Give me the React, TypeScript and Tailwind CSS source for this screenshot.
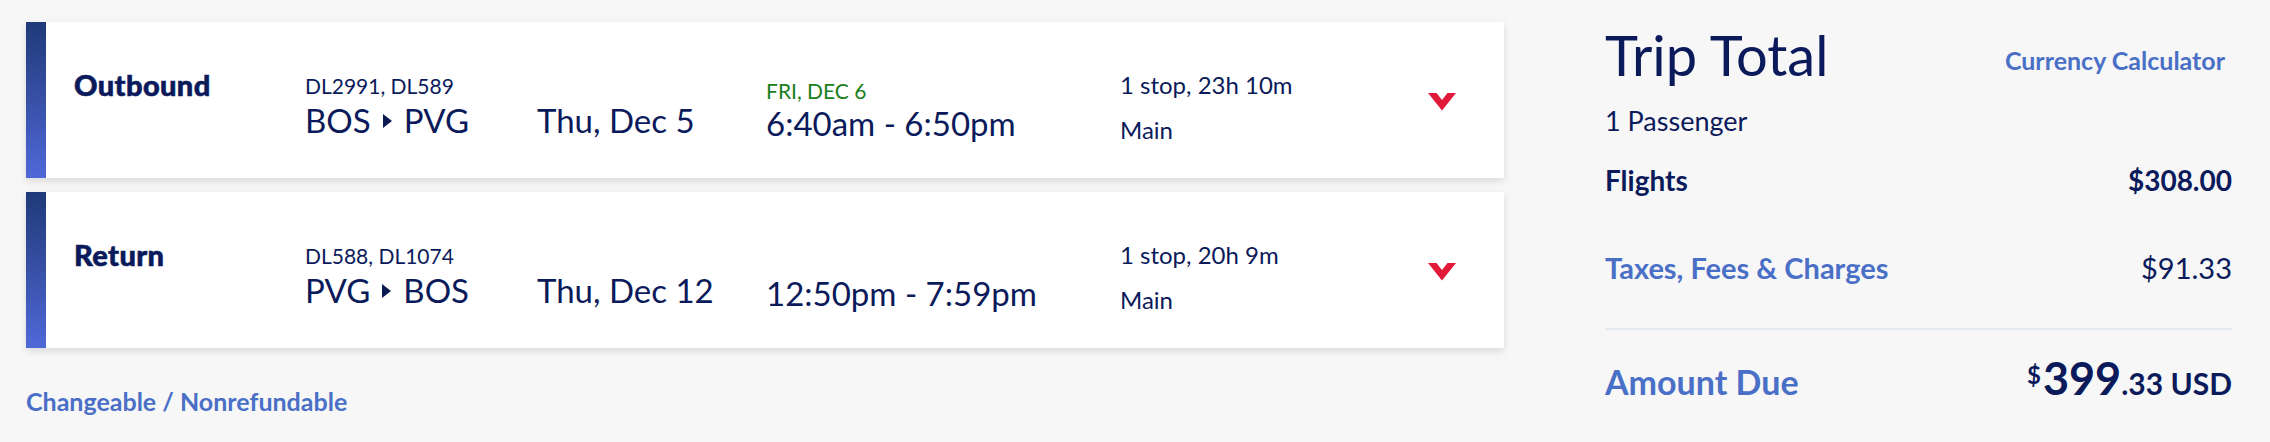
import { ReactNode } from 'react'

interface Leg {
  label: string
  flights: string
  from: string
  to: string
  date: string
  arrivalNote?: string
  times: string
  stops: string
  cabin: string
}

const legs: Leg[] = [
  {
    label: 'Outbound',
    flights: 'DL2991, DL589',
    from: 'BOS',
    to: 'PVG',
    date: 'Thu, Dec 5',
    arrivalNote: 'FRI, DEC 6',
    times: '6:40am - 6:50pm',
    stops: '1 stop, 23h 10m',
    cabin: 'Main',
  },
  {
    label: 'Return',
    flights: 'DL588, DL1074',
    from: 'PVG',
    to: 'BOS',
    date: 'Thu, Dec 12',
    times: '12:50pm - 7:59pm',
    stops: '1 stop, 20h 9m',
    cabin: 'Main',
  },
]

function Chevron() {
  return (
    <svg width="28" height="18" viewBox="0 0 28 18" className="block">
      <path d="M0 0h8.5l5.5 7L19.5 0h8.5L14 17.5z" fill="#e01a38" />
    </svg>
  )
}

function Caret() {
  return (
    <svg width="9" height="14" viewBox="0 0 9 14" className="mx-[12px] mt-[2px] inline-block">
      <path d="M0 0l9 7-9 7z" fill="#0b1a52" />
    </svg>
  )
}

function LegCard({ leg }: { leg: Leg }) {
  return (
    <div className="flex h-[156px] w-[1478px] bg-white shadow-[0_3px_8px_rgba(0,0,0,0.12)]">
      <div className="w-[20px] shrink-0 bg-gradient-to-b from-[#1f3a78] to-[#5068d8]" />
      <div className="w-[259px] shrink-0 pl-[28px] pt-[45px]">
        <div className="text-[29px] leading-[35px] font-black tracking-[0.4px] text-[#0b1a5a] [-webkit-text-stroke:0.6px_#0b1a5a]">
          {leg.label}
        </div>
      </div>
      <div className="w-[232px] shrink-0 pt-[51px]">
        <div className="text-[21px] leading-[25px] text-[#0b1a5a]">{leg.flights}</div>
        <div className="mt-[2px] flex items-center text-[33px] leading-[40px] text-[#0b1a5a]">
          {leg.from}
          <Caret />
          {leg.to}
        </div>
      </div>
      <div className="w-[229px] shrink-0 pt-[78px]">
        <div className="text-[33px] leading-[40px] text-[#0b1a5a]">{leg.date}</div>
      </div>
      <div className="w-[354px] shrink-0 pt-[56px]">
        <div className="h-[25px] text-[21px] leading-[25px] text-[#1b7d1b]">
          {leg.arrivalNote}
        </div>
        <div className="text-[33px] leading-[40px] text-[#0b1a5a]">{leg.times}</div>
      </div>
      <div className="w-[308px] shrink-0 pt-[48px]">
        <div className="text-[24px] leading-[29px] text-[#0b1a5a]">{leg.stops}</div>
        <div className="mt-[16px] text-[24px] leading-[29px] text-[#0b1a5a]">{leg.cabin}</div>
      </div>
      <div className="pt-[71px]">
        <Chevron />
      </div>
    </div>
  )
}

function Row({ left, right, className }: { left: ReactNode; right: ReactNode; className?: string }) {
  return <div className={`flex items-baseline justify-between ${className ?? ''}`}>{left}{right}</div>
}

export default function App() {
  return (
    <div
      className="flex h-[442px] w-[2270px] overflow-hidden bg-[#f7f7f7]"
      style={{ fontFamily: 'Lato, "Liberation Sans", sans-serif' }}
    >
      {/* Flight legs */}
      <div className="w-[1605px] shrink-0 pl-[26px] pt-[22px]">
        <div className="flex flex-col gap-[14px]">
          {legs.map((leg) => (
            <LegCard key={leg.label} leg={leg} />
          ))}
        </div>
        <div className="mt-[38px] text-[25px] leading-[30px] font-bold text-[#4a6fc6]">
          Changeable / Nonrefundable
        </div>
      </div>

      {/* Trip total */}
      <div className="w-[627px] shrink-0 pt-[21px]">
        <div className="flex items-start justify-between">
          <div className="text-[56px] leading-[67px] text-[#0b1a5a]">Trip Total</div>
          <div className="mr-[7px] mt-[24px] text-[25px] leading-[30px] font-bold text-[#4a6fc6]">
            Currency Calculator
          </div>
        </div>
        <div className="mt-[17px] text-[27px] leading-[32px] text-[#0b1a5a]">1 Passenger</div>
        <Row
          className="mt-[27px] text-[28px] leading-[33px] font-bold text-[#0b1a5a]"
          left={<span>Flights</span>}
          right={<span>$308.00</span>}
        />
        <Row
          className="mt-[54px] leading-[34px]"
          left={<span className="text-[29px] font-bold text-[#4a6fc6]">Taxes, Fees &amp; Charges</span>}
          right={<span className="text-[29px] text-[#0b1a5a]">$91.33</span>}
        />
        <div className="mt-[43px] h-[2px] bg-[#e4e9f2]" />
        <Row
          className="mt-[26px] leading-[44px]"
          left={<span className="text-[34px] font-bold text-[#4a6fc6]">Amount Due</span>}
          right={
            <span className="font-bold text-[#0b1a5a]">
              <span className="relative top-[-11px] mr-[2px] text-[24px]">$</span>
              <span className="text-[45px]">399</span>
              <span className="text-[30px]">.33 USD</span>
            </span>
          }
        />
      </div>
    </div>
  )
}
